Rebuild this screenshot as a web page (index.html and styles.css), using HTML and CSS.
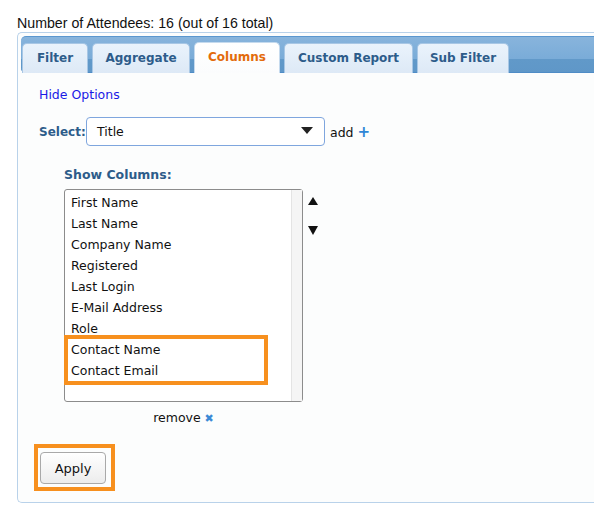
FILE: index.html
```html
<!DOCTYPE html>
<html>
<head>
<meta charset="utf-8">
<link rel="stylesheet" href="styles.css">
</head>
<body>
<div class="count">Number of Attendees: 16 (out of 16 total)</div>
<div class="panel">
  <div class="tabbar">
    <div class="tab t1">Filter</div>
    <div class="tab t2">Aggregate</div>
    <div class="tab t3 active">Columns</div>
    <div class="tab t4">Custom Report</div>
    <div class="tab t5">Sub Filter</div>
  </div>
  <div class="content">
    <div class="hide"><a href="#">Hide Options</a></div>
    <div class="selrow">
      <span class="lbl">Select:</span>
      <div class="select"><span>Title</span>
        <svg class="caret" width="12" height="7" viewBox="0 0 12 7"><path d="M0 0h12L6 7z" fill="#222"/></svg>
      </div>
      <span class="add">add <span class="plus">+</span></span>
    </div>
    <div class="showlbl">Show Columns:</div>
    <div class="listrow">
      <div class="listcol">
        <div class="listbox">
          <div class="items">
            <div class="item">First Name</div>
            <div class="item">Last Name</div>
            <div class="item">Company Name</div>
            <div class="item">Registered</div>
            <div class="item">Last Login</div>
            <div class="item">E-Mail Address</div>
            <div class="item">Role</div>
            <div class="hl">
              <div class="item">Contact Name</div>
              <div class="item">Contact Email</div>
            </div>
          </div>
          <div class="track"></div>
        </div>
        <div class="remove">remove <span class="x">✖</span></div>
      </div>
      <div class="arrows">
        <svg width="10" height="8" viewBox="0 0 10 8"><path d="M5 0L10 8H0z" fill="#111"/></svg>
        <svg width="10" height="9" viewBox="0 0 10 9"><path d="M0 0h10L5 9z" fill="#111"/></svg>
      </div>
    </div>
    <div class="applywrap"><button class="apply">Apply</button></div>
  </div>
</div>
</body>
</html>
```
FILE: styles.css
```css
body {
  margin: 0;
  background: #fff;
  font-family: "DejaVu Sans", Verdana, sans-serif;
  color: #111;
}
.count {
  font-family: "Liberation Sans", Arial, sans-serif;
  font-size: 14.2px;
  line-height: 16px;
  margin-top: 15px;
  padding-left: 17px;
}
.panel {
  margin-left: 17px;
  margin-top: 1px;
  height: 466px;
  border: 1px solid #b9d2ea;
  border-right: none;
  border-radius: 5px 0 0 5px;
  background: #fcfdfd;
  padding-top: 3px;
}
.tabbar {
  margin-left: 3px;
  height: 37px;
  border-top: 1px solid #5a97cf;
  border-radius: 5px 0 0 5px;
  background: linear-gradient(#88b4dc, #7aacd8 60%, #6199c9 62%, #5f97c8);
  display: flex;
  align-items: flex-end;
  gap: 4px;
  padding-left: 1px;
  box-sizing: border-box;
  box-shadow: inset 0 -1px 0 #4f8cc6;
}
.tab {
  height: 30px;
  box-sizing: border-box;
  border: 1px solid #a8c7e5;
  border-bottom: none;
  border-radius: 5px 5px 0 0;
  background: linear-gradient(#eaf3fc, #dde9f6);
  color: #2d5c8a;
  font-weight: bold;
  font-size: 12px;
  line-height: 29px;
  text-align: center;
}
.t1 { width: 66px; }
.t2 { width: 98px; }
.t3 { width: 86px; }
.t4 { width: 129px; }
.t5 { width: 92px; }
.tab.active {
  background: linear-gradient(#ffffff, #fbfcfd);
  color: #e36b0c;
  border-color: #c5daee;
  height: 31px;
}
.content {
  padding-left: 21px;
}
.hide {
  margin-top: 14px;
  font-size: 12.5px;
  line-height: 16px;
}
.hide a {
  color: #1a1ae6;
  text-decoration: none;
}
.selrow {
  margin-top: 14px;
  display: flex;
  align-items: center;
  height: 29px;
}
.lbl {
  font-weight: bold;
  font-size: 12px;
  color: #2d5c8a;
  width: 47px;
}
.select {
  width: 239px;
  height: 29px;
  box-sizing: border-box;
  border: 1px solid #7fa6de;
  border-radius: 4px;
  background: #fff;
  display: flex;
  align-items: center;
  justify-content: space-between;
  padding: 0 11px 0 10px;
  font-size: 12.5px;
}
.caret { margin-top: -3px; }
.add {
  margin-left: 5px;
  font-size: 12.5px;
}
.plus {
  color: #2e86d6;
  font-weight: bold;
  font-size: 15px;
}
.showlbl {
  margin-top: 21px;
  margin-left: 25px;
  font-weight: bold;
  font-size: 12.5px;
  line-height: 16px;
  color: #2d5c8a;
}
.listrow {
  display: flex;
  margin-top: 6px;
  margin-left: 25px;
}
.listcol {
  width: 239px;
}
.listbox {
  height: 213px;
  box-sizing: border-box;
  border: 1px solid #8c8c8c;
  border-radius: 3px;
  background: #fff;
  display: flex;
}
.items {
  flex: 1;
  padding-top: 2px;
  padding-left: 6px;
}
.item {
  font-size: 12.5px;
  line-height: 21px;
  white-space: nowrap;
}
.hl {
  margin: -4px 0 -4px -7px;
  width: 204px;
  box-sizing: border-box;
  border: 4px solid #f7901e;
  padding-left: 3px;
}
.track {
  width: 10px;
  background: #f5f5f5;
  border-left: 1px solid #e4e4e4;
}
.remove {
  text-align: center;
  margin-top: 8px;
  font-size: 12.5px;
  line-height: 16px;
}
.x {
  color: #3b8ad6;
  font-size: 11px;
}
.arrows {
  display: flex;
  flex-direction: column;
  margin-left: 5px;
  padding-top: 8px;
  gap: 21px;
}
.applywrap {
  margin-top: 17px;
  margin-left: -5px;
  width: 81px;
  height: 47px;
  box-sizing: border-box;
  border: 4px solid #f7901e;
  padding: 4px 0 0 2px;
}
.apply {
  width: 66px;
  height: 32px;
  border: 1px solid #a9a9a9;
  border-radius: 4px;
  background: linear-gradient(#ffffff, #ececec);
  font-family: "DejaVu Sans", Verdana, sans-serif;
  font-size: 13px;
  color: #111;
  padding: 0;
}
```
